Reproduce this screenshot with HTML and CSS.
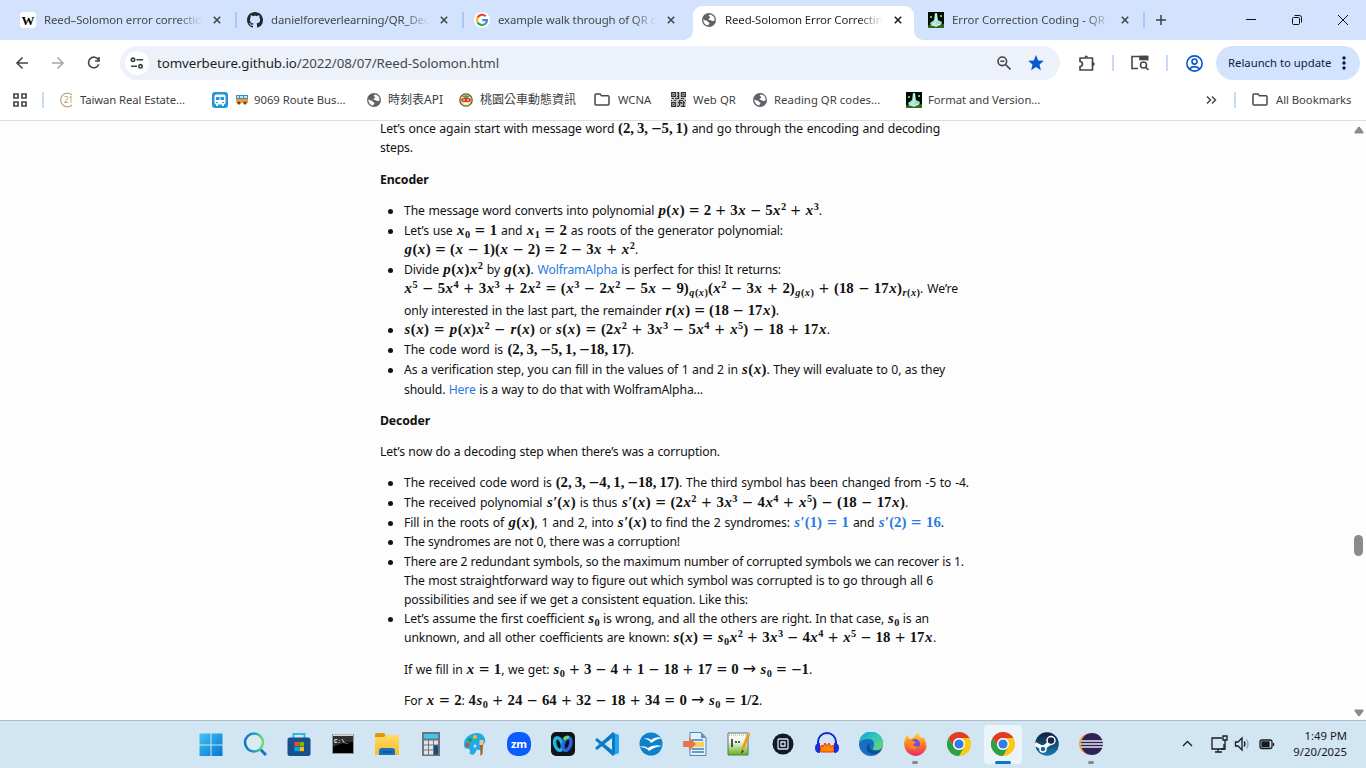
FILE: index.html
```html
<!DOCTYPE html>
<html lang="en">
<head>
<meta charset="utf-8">
<title>Reed-Solomon Error Correcting Codes</title>
<link rel="stylesheet" href="styles.css">
</head>
<body>
<svg class="defs" aria-hidden="true">
  <defs>
    <symbol id="x" viewBox="0 0 8 8"><path d="M.8.8l6.4 6.4M7.2.8L.8 7.2" stroke="currentColor" stroke-width="1.6" fill="none"/></symbol>
    <symbol id="globe" viewBox="0 0 14 14"><circle cx="7" cy="7" r="7" fill="#5f6368"/><path d="M8.2 1.4c-2 .4-1.7 1.8-.7 2.2 1.3.3.6 1.5-.5 1.9-1 .3-.3 1.4.8 1.4 1.4 0 1.7 1.1 2.8 1.2 1 .1 1.7-.5 2-1.2.2-3-1.900-5-4.400-5.500zM1.400 6.200c1.500 1.500 2.600 1.200 3.700 1.500.8.4.6 1.600 1.700 1.700 1.100.2.800 1 .200 1.500-.7.600-.600 1.300-.900 1.700-3-.6-5-3.200-4.700-6.400z" fill="#fff"/></symbol>
    <symbol id="folder" viewBox="0 0 16 13"><path d="M1 2q0-1 1-1h4l1.600 1.700H14q1 0 1 1V11q0 1-1 1H2q-1 0-1-1z" fill="none" stroke="#474747" stroke-width="1.500"/></symbol>
    <symbol id="spring" viewBox="0 0 16 16"><path fill="#020802" d="M0 0h16v16H0z"/><path d="M7 1h2l1 7 4 2-1 4-5 1-5-1-1-3 4-3z" fill="#9bdcc4"/><path d="M8 2v8l-3 2 3 2 4-2" stroke="#edfff8" fill="none"/><path d="M2 4h2v2H2zM12 3h2v2h-2z" fill="#4fd45b"/><path d="M0 13l4 1 4 1 4-2 4-1v4H0z" fill="#306c18"/></symbol>
    <symbol id="chrome" viewBox="0 0 24 24"><circle cx="12" cy="12" r="12" fill="#fbc816"/><path d="M1.600 6A12 12 0 0 1 22.400 6H12a6 6 0 0 0-5.200 9z" fill="#e23b2e"/><path d="M1.600 6A12 12 0 0 0 12 24l5.200-9a6 6 0 0 1-10.400 0z" fill="#2da04b"/><circle cx="12" cy="12" r="6" fill="#fff"/><circle cx="12" cy="12" r="4.600" fill="#2f7de9"/></symbol>
    <linearGradient id="win" x2="1" y2="1"><stop stop-color="#40c4f5"/><stop offset="1" stop-color="#0675cd"/></linearGradient>
    <linearGradient id="lens" x2="1"><stop stop-color="#1271c8"/><stop offset=".5" stop-color="#16a0ba"/><stop offset="1" stop-color="#6ddc73"/></linearGradient>
    <linearGradient id="fold" x2="0" y2="1"><stop stop-color="#ffdb67"/><stop offset="1" stop-color="#f9bd24"/></linearGradient>
    <linearGradient id="edge" x2="1" y2="1"><stop stop-color="#129fd7"/><stop offset=".5" stop-color="#32c8bb"/><stop offset="1" stop-color="#72d65c"/></linearGradient>
    <linearGradient id="fox" x2="0" y2="1"><stop stop-color="#ffe13b"/><stop offset=".5" stop-color="#ff8025"/><stop offset="1" stop-color="#e72768"/></linearGradient>
    <linearGradient id="steam" x2="0" y2="1"><stop stop-color="#101c3d"/><stop offset="1" stop-color="#157fb0"/></linearGradient>
    <linearGradient id="webex" x2="1"><stop stop-color="#27d1e8"/><stop offset=".5" stop-color="#2465ee"/><stop offset="1" stop-color="#5dd66c"/></linearGradient>
    <linearGradient id="doc" x2="0" y2="1"><stop stop-color="#fff"/><stop offset=".4" stop-color="#eef6e6"/><stop offset="1" stop-color="#5cb512"/></linearGradient>
  </defs>
</svg>

<header class="tabs">
  <div class="tab t1"><svg class="fav" viewBox="0 0 16 16"><rect width="16" height="16" rx="3" fill="#fff"/><text x="8" y="12.500" text-anchor="middle" class="wiki">W</text></svg><span class="title">Reed–Solomon error correctio</span><svg class="x"><use href="#x"/></svg></div>
  <div class="tab t2"><svg class="fav" viewBox="0 0 16 16"><path fill="#24292f" d="M8 0C3.580 0 0 3.580 0 8c0 3.540 2.290 6.530 5.470 7.590.4.070.55-.17.55-.38 0-.19-.01-.82-.01-1.490-2.010.37-2.530-.49-2.690-.94-.09-.23-.48-.94-.82-1.130-.28-.15-.68-.52-.01-.53.63-.01 1.080.58 1.230.82.72 1.210 1.870.87 2.330.66.07-.52.28-.87.51-1.070-1.780-.2-3.640-.89-3.640-3.950 0-.87.31-1.590.82-2.150-.08-.2-.36-1.020.08-2.120 0 0 .67-.21 2.200.82.64-.18 1.320-.27 2-.27s1.360.09 2 .27c1.530-1.040 2.200-.82 2.200-.82.44 1.100.16 1.920.08 2.120.51.56.82 1.270.82 2.150 0 3.070-1.870 3.750-3.650 3.950.29.25.54.73.54 1.480 0 1.070-.01 1.930-.01 2.200 0 .21.15.46.55.38A8.010 8.010 0 0 0 16 8c0-4.420-3.580-8-8-8z"/></svg><span class="title">danielforeverlearning/QR_Dec</span><svg class="x"><use href="#x"/></svg></div>
  <div class="tab t3"><svg class="fav" viewBox="0 0 16 16"><circle cx="8" cy="8" r="8" fill="#fff"/><g fill="none" stroke-width="2.200"><path d="M11.700 4.300A5 5 0 0 0 3.600 5.600" stroke="#ea4335"/><path d="M3.600 5.600a5 5 0 0 0 0 4.800" stroke="#fbbc05"/><path d="M3.600 10.400a5 5 0 0 0 7.700 1.300" stroke="#34a853"/><path d="M11.300 11.700A5 5 0 0 0 13 8.200H8.200" stroke="#4285f4"/></g></svg><span class="title">example walk through of QR c</span><svg class="x"><use href="#x"/></svg></div>
  <div class="tab t4 active"><svg class="fav" viewBox="0 0 14 14"><use href="#globe"/></svg><span class="title">Reed-Solomon Error Correctin</span><svg class="x"><use href="#x"/></svg></div>
  <div class="tab t5"><svg class="fav"><use href="#spring"/></svg><span class="title">Error Correction Coding - QR</span><svg class="x"><use href="#x"/></svg></div>
  <svg class="plus" viewBox="0 0 10 10"><path d="M5 0v10M0 5h10" stroke="#3c4043" stroke-width="1.500"/></svg>
  <svg class="wctl" viewBox="0 0 104 12"><g fill="none" stroke="#111" stroke-width="1"><path d="M0 5.500h10M92 1l10 10M102 1L92 11"/><rect x="46.500" y="3.500" width="7" height="7" rx="1"/><path d="M48.500 1.500h5q2 0 2 2v5"/></g></svg>
</header>

<div class="toolbar">
  <svg class="nav" viewBox="0 0 90 16" fill="none" stroke="#474747" stroke-width="1.600"><path d="M13 8H2M7.500 2.500L2 8l5.500 5.500"/><path stroke="#a8a8a8" d="M37 8h11M42.500 2.500L48 8l-5.500 5.500"/><path d="M83.500 5A5.300 5.300 0 1 0 83.800 9.300M84 2v4H80"/></svg>
  <div class="omni">
    <span class="site"><svg viewBox="0 0 14 12" fill="none" stroke="#3c4043" stroke-width="1.600"><circle cx="3" cy="2.800" r="1.700"/><path d="M6.500 2.800H13M1 9.300h6"/><circle cx="10.500" cy="9.300" r="1.700"/></svg></span>
    <span class="url"><em>tomverbeure.github.io</em>/2022/08/07/Reed-Solomon.html</span>
    <svg class="mag" viewBox="0 0 14 14" fill="none" stroke="#474747" stroke-width="1.600"><circle cx="5.300" cy="5.300" r="4.300"/><path d="M8.500 8.500l5 5M3.300 5.300h4"/></svg>
    <svg class="star" viewBox="0 0 16 16"><path d="M8 0l2.200 5.400 5.600.4-4.300 3.700 1.400 5.700L8 12.100l-4.900 3.100 1.400-5.700L.2 5.800l5.600-.4z" fill="#0b57d0"/></svg>
  </div>
  <svg class="puz" viewBox="0 0 16 16" fill="none" stroke="#474747" stroke-width="1.700"><path d="M1 3h12.500v12H1v-3.500q2.500-.3 2.500-2.500T1 6.500z" stroke-linejoin="round"/><path d="M5.500 2.500q0-2 1.700-2t1.700 2zM14 7q1.700 0 1.700 2T14 11z" fill="#474747" stroke="none"/></svg>
  <i class="sep"></i>
  <svg class="lenspage" viewBox="0 0 18 16" fill="none" stroke="#474747" stroke-width="1.600"><path d="M7 13.500H1V1.500h15.500v4"/><path d="M9 1.500h7.500v3H9z" fill="#474747"/><circle cx="12.500" cy="10" r="3"/><path d="M14.500 12l3 3"/></svg>
  <i class="sep"></i>
  <svg class="user" viewBox="0 0 16 16" fill="none" stroke="#0b57d0" stroke-width="1.500"><circle cx="8" cy="8" r="7.200"/><circle cx="8" cy="6.200" r="2.400"/><path d="M3.200 13q4.800-4 9.600 0"/></svg>
  <div class="relaunch"><span>Relaunch to update</span><svg viewBox="0 0 4 14" fill="#041e49"><circle cx="2" cy="2" r="1.700"/><circle cx="2" cy="7" r="1.700"/><circle cx="2" cy="12" r="1.700"/></svg></div>
</div>

<nav class="marks">
  <svg class="apps" viewBox="0 0 14 14" fill="none" stroke="#474747" stroke-width="1.700"><path d="M1 1h4v4H1zM9 1h4v4H9zM1 9h4v4H1zM9 9h4v4H9z"/></svg><i class="sep"></i>
  <span class="bm b1"><svg viewBox="0 0 14 16"><path d="M12 3A6.800 6.800 0 1 0 12 13" fill="none" stroke="#c3ab82" stroke-width="1.200"/><text x="4" y="11" class="t21">21</text></svg>Taiwan Real Estate...</span>
  <span class="bm b2"><svg viewBox="0 0 16 16"><rect width="16" height="16" rx="3" fill="#2596dc"/><rect x="2.500" y="2.500" width="11" height="10" rx="2" fill="#fff"/><path d="M4 5h3.500v3H4zM8.500 5H12v3H8.500zM4 10h2v1H4zM10 10h2v1h-2z" fill="#2596dc"/><path d="M4 12h2v2H4zM10 12h2v2h-2z" fill="#fff"/></svg><svg class="bus" viewBox="0 0 12 10"><path d="M0 0h12v4H0z" fill="#3e8ccc"/><path d="M1 1h2v2H1zM4 1h3v2H4zM8 1h3v2H8z" fill="#bfe5f5"/><path d="M0 4h12v4H0z" fill="#f29b24"/><circle cx="3" cy="8" r="1.600" fill="#713444"/><circle cx="9" cy="8" r="1.600" fill="#713444"/></svg>9069 Route Bus...</span>
  <span class="bm b3"><svg viewBox="0 0 14 14"><use href="#globe"/></svg>時刻表API</span>
  <span class="bm b4"><svg viewBox="0 0 14 14"><circle cx="7" cy="7" r="6.200" fill="#f4e9a5" stroke="#665a22" stroke-width="1.300"/><path d="M3 3.500Q7 1 11 3.500L8 5H6z" fill="#5e9e3e"/><ellipse cx="7" cy="7" rx="5" ry="2.300" fill="#d43b45"/><path d="M4 7h2M8 7h2M5 10h4" stroke="#fff"/></svg>桃園公車動態資訊</span>
  <span class="bm b5"><svg><use href="#folder"/></svg>WCNA</span>
  <span class="bm b6"><svg viewBox="0 0 15 15"><path fill="#c4c4c4" d="M0 0h15v15H0z"/><path d="M0 .7h5m1 0h2m2 0h5M0 4.300h5m1 0h1m3 0h5M.7 0v5M4.300 0v5M10.700 0v5M14.300 0v5M0 10.700h5m2 0h3m2 0h2M0 14.300h5m1 0h2m2 0h4M.7 10v5M4.300 10v5M2 2.500h1M12 2.500h1M2 12.500h1M1 6.500h2m1 0h4m2 0h3M0 8.500h1m2 0h2m3 0h4m2 0h1M7.500 1v6m1 2v5M12.500 9v5M10.500 10v2" stroke="#333" stroke-width="1.200"/></svg>Web QR</span>
  <span class="bm b7"><svg viewBox="0 0 14 14"><use href="#globe"/></svg>Reading QR codes...</span>
  <span class="bm b8"><svg><use href="#spring"/></svg>Format and Version...</span>
  <svg class="more" viewBox="0 0 11 8" fill="none" stroke="#474747" stroke-width="1.500"><path d="M1 .5L4.500 4 1 7.500M6 .5L9.500 4 6 7.500"/></svg><i class="sep"></i>
  <span class="bm all"><svg><use href="#folder"/></svg>All Bookmarks</span>
</nav>

<main class="page">
  <article class="post">
    <p class="para"><span class="line s w560">Let’s once again start with message word <b>(2,&#8201;3,&#8201;<i>−</i>5,&#8201;1)</b> and go through the encoding and decoding</span><span class="line">steps.</span></p>
    <h4 class="line head">Encoder</h4>
    <ul class="list">
      <li><span class="line w418">The message word converts into polynomial <b><var>p</var>(<var>x</var>) <i>=</i> 2 <i>+</i> 3<var>x</var> <i>−</i> 5<var>x</var><sup>2</sup> <i>+</i> <var>x</var><sup>3</sup></b>.</span></li>
      <li><span class="line s w379">Let’s use <b><var>x</var><sub>0</sub> <i>=</i> 1</b> and <b><var>x</var><sub>1</sub> <i>=</i> 2</b> as roots of the generator polynomial:</span><span class="line w234"><b><var>g</var>(<var>x</var>) <i>=</i> (<var>x</var> <i>−</i> 1)(<var>x</var> <i>−</i> 2) <i>=</i> 2 <i>−</i> 3<var>x</var> <i>+</i> <var>x</var><sup>2</sup></b>.</span></li>
      <li><span class="line s w377">Divide <b><var>p</var>(<var>x</var>)<var>x</var><sup>2</sup></b> by <b><var>g</var>(<var>x</var>)</b>. <a>WolframAlpha</a> is perfect for this! It returns:</span><span class="line l w554"><b><var>x</var><sup>5</sup> <i>−</i> 5<var>x</var><sup>4</sup> <i>+</i> 3<var>x</var><sup>3</sup> <i>+</i> 2<var>x</var><sup>2</sup> <i>=</i> (<var>x</var><sup>3</sup> <i>−</i> 2<var>x</var><sup>2</sup> <i>−</i> 5<var>x</var> <i>−</i> 9)<sub><var>q</var>(<var>x</var>)</sub>(<var>x</var><sup>2</sup> <i>−</i> 3<var>x</var> <i>+</i> 2)<sub><var>g</var>(<var>x</var>)</sub> <i>+</i> (18 <i>−</i> 17<var>x</var>)<sub><var>r</var>(<var>x</var>)</sub></b>. We’re</span><span class="line s w375">only interested in the last part, the remainder <b><var>r</var>(<var>x</var>) <i>=</i> (18 <i>−</i> 17<var>x</var>)</b>.</span></li>
      <li><span class="line w426"><b><var>s</var>(<var>x</var>) <i>=</i> <var>p</var>(<var>x</var>)<var>x</var><sup>2</sup> <i>−</i> <var>r</var>(<var>x</var>)</b> or <b><var>s</var>(<var>x</var>) <i>=</i> (2<var>x</var><sup>2</sup> <i>+</i> 3<var>x</var><sup>3</sup> <i>−</i> 5<var>x</var><sup>4</sup> <i>+</i> <var>x</var><sup>5</sup>) <i>−</i> 18 <i>+</i> 17<var>x</var></b>.</span></li>
      <li><span class="line w230">The code word is <b>(2,&#8201;3,&#8201;<i>−</i>5,&#8201;1,&#8201;<i>−</i>18,&#8201;17)</b>.</span></li>
      <li><span class="line w541">As a verification step, you can fill in the values of 1 and 2 in <b><var>s</var>(<var>x</var>)</b>. They will evaluate to 0, as they</span><span class="line w299">should. <a>Here</a> is a way to do that with WolframAlpha...</span></li>
    </ul>
    <h4 class="line head">Decoder</h4>
    <p class="para"><span class="line w340">Let’s now do a decoding step when there’s was a corruption.</span></p>
    <ul class="list">
      <li><span class="line w565">The received code word is <b>(2,&#8201;3,&#8201;<i>−</i>4,&#8201;1,&#8201;<i>−</i>18,&#8201;17)</b>. The third symbol has been changed from -5 to -4.</span></li>
      <li><span class="line w504">The received polynomial <b><var>s</var>′(<var>x</var>)</b> is thus <b><var>s</var>′(<var>x</var>) <i>=</i> (2<var>x</var><sup>2</sup> <i>+</i> 3<var>x</var><sup>3</sup> <i>−</i> 4<var>x</var><sup>4</sup> <i>+</i> <var>x</var><sup>5</sup>) <i>−</i> (18 <i>−</i> 17<var>x</var>)</b>.</span></li>
      <li><span class="line s w540">Fill in the roots of <b><var>g</var>(<var>x</var>)</b>, 1 and 2, into <b><var>s</var>′(<var>x</var>)</b> to find the 2 syndromes: <a><b><var>s</var>′(1) <i>=</i> 1</b></a> and <a><b><var>s</var>′(2) <i>=</i> 16</b></a>.</span></li>
      <li><span class="line w276">The syndromes are not 0, there was a corruption!</span></li>
      <li><span class="line s w560">There are 2 redundant symbols, so the maximum number of corrupted symbols we can recover is 1.</span><span class="line s w529">The most straightforward way to figure out which symbol was corrupted is to go through all 6</span><span class="line s w344">possibilities and see if we get a consistent equation. Like this:</span></li>
      <li><span class="line s w525">Let’s assume the first coefficient <b><var>s</var><sub>0</sub></b> is wrong, and all the others are right. In that case, <b><var>s</var><sub>0</sub></b> is an</span><span class="line w532">unknown, and all other coefficients are known: <b><var>s</var>(<var>x</var>) <i>=</i> <var>s</var><sub>0</sub><var>x</var><sup>2</sup> <i>+</i> 3<var>x</var><sup>3</sup> <i>−</i> 4<var>x</var><sup>4</sup> <i>+</i> <var>x</var><sup>5</sup> <i>−</i> 18 <i>+</i> 17<var>x</var></b>.</span>
        <p class="sub first"><span class="line w408">If we fill in <b><var>x</var> <i>=</i> 1</b>, we get: <b><var>s</var><sub>0</sub> <i>+</i> 3 <i>−</i> 4 <i>+</i> 1 <i>−</i> 18 <i>+</i> 17 <i>=</i> 0 <i class="arrow">→</i> <var>s</var><sub>0</sub> <i>=</i> <i>−</i>1</b>.</span></p>
        <p class="sub"><span class="line w358">For <b><var>x</var> <i>=</i> 2</b>: <b>4<var>s</var><sub>0</sub> <i>+</i> 24 <i>−</i> 64 <i>+</i> 32 <i>−</i> 18 <i>+</i> 34 <i>=</i> 0 <i class="arrow">→</i> <var>s</var><sub>0</sub> <i>=</i> 1/2</b>.</span></p></li>
    </ul>
  </article>
  <div class="scroll"><svg viewBox="0 0 10 8"><path d="M5 .5q.5 0 .8.400L9.500 6q.3 1.500-.700 1.500H1.200Q.2 7.500.5 6L4.200.9Q4.500.5 5 .5z" fill="#8b8b8b"/></svg><span class="thumb"></span><svg class="down" viewBox="0 0 10 8"><path d="M5 .5q.5 0 .8.400L9.500 6q.3 1.500-.700 1.500H1.200Q.2 7.500.5 6L4.200.9Q4.500.5 5 .5z" fill="#8b8b8b"/></svg></div>
</main>

<footer class="taskbar">
  <span class="app"><svg viewBox="0 0 24 24" fill="url(#win)"><path d="M.5 1.500H11.500v11H.5zM12.500 1.500H23.500v11H12.500zM.5 13.500H11.500V24H.5zM12.500 13.500H23.500V24H12.500z"/></svg></span>
  <span class="app"><svg viewBox="0 0 24 24" fill="none"><path d="M17.500 17.500L23 23" stroke="#1272c5" stroke-width="3"/><circle cx="11" cy="10.500" r="9" fill="#dceaf1" stroke="url(#lens)" stroke-width="2.500"/></svg></span>
  <span class="app"><svg viewBox="0 0 24 24"><path d="M6.500 7V2h11v5" fill="none" stroke="#2cb9e5" stroke-width="2"/><rect x=".5" y="5.500" width="23" height="18.500" rx="2.500" fill="#17508b"/><path d="M7.500 10H12v4H7.500z" fill="#f25022"/><path d="M12.500 10H17v4h-4.500z" fill="#7fba00"/><path d="M7.500 14.700H12v4.500H7.500z" fill="#00a4ef"/><path d="M12.500 14.700H17v4.500h-4.500z" fill="#ffb900"/></svg></span>
  <span class="app"><svg viewBox="0 0 24 24"><path fill="#909699" d="M1 2h22v20H1z"/><path d="M2 4h20v17H2z"/><path d="M2 4h20v6q-10 0-20 5z" fill="#303030"/><path d="M2 2.500h20V4H2z" fill="#d8d8d8"/><text x="3" y="11" class="cmd">C:\_</text></svg></span>
  <span class="app"><svg viewBox="0 0 24 24"><path d="M0 3q0-2 2-2h7l2 3v4H0z" fill="#dc960e"/><path d="M0 5h9l2-2h13v20H0z" fill="url(#fold)"/><path d="M4 23v-4q0-3 3-3h10q3 0 3 3v4z" fill="#1571bc"/><path d="M7 20h10" stroke="#0a538f" stroke-width="1.500"/></svg></span>
  <span class="app"><svg viewBox="0 0 24 24"><path fill="#6f7679" d="M3 0h18v24H3z"/><path fill="#42c7f3" d="M5 2h14v4.500H5z"/><path fill="#dfe5e8" d="M5 8.500h4v4H5zM10 8.500h4v4h-4zM15 8.500h4v4h-4zM5 13.500h4v4H5zM10 13.500h4v4h-4zM5 18.500h4v4H5zM10 18.500h4v4h-4z"/><path fill="#174a85" d="M15 13.500h4v9h-4z"/></svg></span>
  <span class="app"><svg viewBox="0 0 24 24"><path d="M1 12C1 5 8 1 14 1c6 0 9 5 8 9l-4 8c-3 0-4-1-5 1-1 3-3 5-6 3-1-2 1-4-1-5s-5 1-5-5z" fill="#22abe3"/><circle cx="12" cy="5" r="2" fill="#ffb319"/><circle cx="7" cy="8" r="2" fill="#249e38"/><circle cx="4.500" cy="13" r="2" fill="#dd4a23"/><circle cx="12" cy="14" r="1.500" fill="#d2e5f3"/><path d="M16.500 8h4v5h-4z" fill="#e5c795"/><path d="M17 13h3l-.5 9-2 2z" fill="#a4662a"/></svg></span>
  <span class="app"><svg viewBox="0 0 24 24"><rect width="24" height="24" rx="10" fill="#0b5cff"/><text x="12" y="15.500" text-anchor="middle" class="zm">zm</text></svg></span>
  <span class="app"><svg viewBox="0 0 24 24"><rect width="24" height="24" rx="5" fill="#111416"/><g fill="none" stroke-width="3.400"><ellipse cx="7.500" cy="12" rx="3.600" ry="6.500" transform="rotate(-18 7.500 12)" stroke="#21b6de"/><ellipse cx="16" cy="12" rx="3.600" ry="6.500" transform="rotate(18 16 12)" stroke="#2465ee"/><path d="M13 7.500q2-3 5-2" stroke="#5dd66c"/></g></svg></span>
  <span class="app"><svg viewBox="0 0 24 24"><path d="M17 0l7 3v18l-7 3z" fill="#27a4ef"/><path d="M17 6v12L2 6 0 8l18 16 2-3V3l-2-3L0 16l2 2z" fill="#087bc3"/></svg></span>
  <span class="app"><svg viewBox="0 0 24 24"><circle cx="12" cy="12" r="11.500" fill="#0e82c9"/><path d="M5 7q4-2 7 1 4-4 11-2-6 1-11 5-2-4-7-4zM0 15q5-2 9 1 5-4 14-2-8 1-13 5-3-4-10-4z" fill="#fff"/></svg></span>
  <span class="app"><svg viewBox="0 0 24 24"><path d="M7 .5h11l5 5V23.500H7z" fill="#e4f1fb" stroke="#5086b7"/><path d="M18 0v6h5" fill="#4a91cd"/><path d="M9 8h11M9 17h12M9 20h12" stroke="#3d80b9" stroke-width="1.500"/><path d="M7 10h14v5H7z" fill="#ffcd58"/><path d="M0 9h6V5l7 7-7 7v-4H0z" fill="#e3764e"/></svg></span>
  <span class="app"><svg viewBox="0 0 24 24"><path d="M1 1h20v22H1z" fill="url(#doc)" stroke="#637263"/><path d="M2 3h18" stroke="#999" stroke-dasharray="1 1"/><path d="M5 7v8M8 10h2M11 10h2" stroke="#222" stroke-width="1.500"/><path d="M22 1L15 19" stroke="#e3a21d" stroke-width="3"/><path d="M15 18l-1 4 3-3" fill="#333"/></svg></span>
  <span class="app"><svg viewBox="0 0 24 24"><circle cx="12" cy="12" r="10.500" fill="#11192f"/><rect x="7" y="7" width="10" height="10" rx="1" fill="none" stroke="#dce2e8" stroke-width="1.300"/><path d="M10 10h4v4h-4z" fill="none" stroke="#dce2e8" stroke-width="1.300"/></svg></span>
  <span class="app"><svg viewBox="0 0 24 24"><path d="M3 13V10a9 9 0 0 1 18 0v3" fill="none" stroke="#112ac9" stroke-width="2"/><path d="M5 15l2-2 1 2 2-4 2 3 2-3 2 4 2-2 1 5-1 2H6z" fill="#ff8a00" stroke="#f62b0c"/><path d="M5 11q-5 0-5 5t5 5zM19 11q5 0 5 5t-5 5z" fill="#1c2ed1"/></svg></span>
  <span class="app"><svg viewBox="0 0 24 24"><circle cx="12" cy="12" r="12" fill="#176fc0"/><path d="M0 11A12 12 0 0 1 24 12q0 6-7 6-5 0-2-4 1-7-6-7-6 0-9 4z" fill="url(#edge)"/><path d="M10 11q-6 8 3 11 7 0 9-4-8 3-11-1z" fill="#0d4a94"/></svg></span>
  <span class="app"><svg viewBox="0 0 24 24"><path d="M4 3l3 4 4-2 4-5 2 5 4 1q5 9 0 14-8 8-17 0-6-8 0-17z" fill="url(#fox)"/><circle cx="12" cy="12" r="5" fill="#7450d3"/><path d="M4 8q5-2 9 3l-3 1q1 4 6 2-4 6-10 1z" fill="#ff8a20"/></svg><i class="dot"></i></span>
  <span class="app"><svg><use href="#chrome"/></svg></span>
  <span class="app on"><svg><use href="#chrome"/></svg><i class="bar"></i></span>
  <span class="app"><svg viewBox="0 0 24 24"><circle cx="12" cy="12" r="11.800" fill="url(#steam)"/><path d="M0 12l8 4 7-5" stroke="#fff" stroke-width="4" fill="none"/><circle cx="16" cy="8.500" r="4" fill="#15264c" stroke="#fff" stroke-width="1.500"/><circle cx="8" cy="17" r="3" fill="#226395" stroke="#fff" stroke-width="1.500"/></svg></span>
  <span class="app"><svg viewBox="0 0 24 24"><circle cx="10.500" cy="12" r="10.500" fill="#f49b36"/><circle cx="13" cy="12" r="11" fill="#2c2255"/><path d="M2 9h22M1.500 12H24M2 15h22" stroke="#e7e5ef" stroke-width="1.500"/></svg><i class="dot"></i></span>
  <svg class="tray" viewBox="0 0 96 20" fill="none" stroke="#171b20" stroke-width="1.300"><path d="M1 12l4.500-4.500L10 12"/><path d="M40 4H30v11h12v-5M36 15v3M33 18h7"/><path d="M41 2h4v4h-4zM43 6v9h-4"/><path d="M53.500 8H56l4-4v12l-4-4h-2.500zM62 7.500q2 2.500 0 5"/><path d="M64.500 5.500q3 4.500 0 9" stroke="#93a2b0"/><rect x="78" y="6" width="12" height="8.500" rx="2"/><path d="M80 8h7v4.500h-7z" fill="#171b20"/><path d="M91.500 9v3"/></svg>
  <div class="clock"><span>1:49 PM</span><span>9/20/2025</span></div>
</footer>
</body>
</html>
```
FILE: styles.css
```css
* { box-sizing: border-box; }
body { margin: 0; width: 1366px; height: 768px; overflow: hidden; background: #fff; color: #111; font: 11.4px/20px "Noto Sans", "Noto Sans CJK TC", sans-serif; display: flex; flex-direction: column; }
svg { flex: none; display: block; }
.defs { position: absolute; width: 0; height: 0; }

.tabs { height: 40px; background: #d3e3fd; display: flex; align-items: center; flex: none; }
.tab { display: flex; align-items: center; height: 24px; color: #454746; position: relative; }
.t1, .t2, .t3, .t4, .t5 { padding-left: 20px; }
.t1 { width: 237px; border-right: 2px solid #a8c7fa; height: 16px; }
.t2 { width: 227px; padding-left: 10px; border-right: 2px solid #a8c7fa; height: 16px; }
.t3 { width: 229px; padding-left: 10px; }
.t4 { width: 221px; padding-left: 9px; }
.t5 { width: 231px; padding-left: 14px; border-right: 2px solid #a8c7fa; height: 16px; }
.tab.active { height: 34px; align-self: flex-end; background: #fff; border-radius: 9px 9px 0 0; color: #1f1f1f; padding-bottom: 6px; }
.active::before, .active::after { content: ""; position: absolute; bottom: 0; width: 9px; height: 9px; }
.active::before { left: -9px; background: radial-gradient(circle at 0 0, transparent 8.5px, #fff 9px); }
.active::after { right: -9px; background: radial-gradient(circle at 100% 0, transparent 8.5px, #fff 9px); }
.fav { width: 16px; height: 16px; margin-right: 8px; }
.active .fav { width: 14px; height: 14px; margin: 0 9px 0 0; }
.title { width: 158px; white-space: nowrap; line-height: 20px; letter-spacing: -.1px; -webkit-mask-image: linear-gradient(90deg, #000 134px, transparent 158px); mask-image: linear-gradient(90deg, #000 134px, transparent 158px); }
.t5 .title { letter-spacing: 0; }
.x { width: 8px; height: 8px; margin-left: 11px; }
.active .x { margin-left: 11px; }
.wiki { font: bold 13px "Liberation Serif", serif; }
.plus { width: 10px; height: 10px; margin-left: 11px; }
.wctl { width: 104px; height: 12px; margin-left: 80px; }

.toolbar { height: 46px; flex: none; display: flex; align-items: center; padding: 0 6px 0 15px; }
.nav { width: 90px; height: 16px; margin-right: 15px; }
.omni { width: 940px; flex: none; height: 34px; border-radius: 17px; background: #edf1fa; display: flex; align-items: center; padding-left: 5px; }
.site { width: 24px; height: 24px; border-radius: 50%; background: #fff; display: flex; align-items: center; justify-content: center; margin-right: 8px; }
.site svg { width: 14px; height: 12px; }
.url { width: 840px; font-size: 13.3px; color: #474747; letter-spacing: -.07px; }
.url em { font-style: normal; color: #1f1f1f; }
.mag { width: 14px; height: 14px; }
.star { width: 16px; height: 16px; margin-left: 17px; }
.puz { width: 16px; height: 16px; margin: 0 17px 0 19px; }
.sep { width: 2px; height: 16px; background: #c8dcfa; flex: none; }
.lenspage { width: 18px; height: 16px; margin: 0 17px 0 17px; }
.user { width: 17px; height: 17px; margin: 0 13px 0 18px; }
.relaunch { width: 144px; height: 34px; border-radius: 17px; background: #d3e3fd; color: #041e49; display: flex; align-items: center; padding-left: 12px; white-space: nowrap; flex: none; }
.relaunch span { width: 114px; font-size: 11.3px; }
.relaunch svg { width: 4px; height: 14px; }

.marks { height: 35px; flex: none; display: flex; align-items: center; padding: 0 0 7px 13px; color: #3c4043; font-size: 11.3px; border-bottom: 1px solid #dedede; letter-spacing: -.05px; }
.apps { width: 14px; height: 14px; margin-right: 15px; }
.bm { display: flex; align-items: center; white-space: nowrap; flex: none; }
.bm svg { width: 14px; height: 14px; margin-right: 7px; }
.b1 { width: 152px; margin-left: 16px; letter-spacing: -.1px; }
.b1 svg { height: 16px; margin-right: 6px; }
.b2 { width: 155px; letter-spacing: -.02px; }
.b2 svg, .b8 svg { width: 16px; height: 16px; }
.b2 .bus { width: 12px; height: 10px; margin: 0 6px 0 1px; }
.b3 { width: 92px; }
.b4 { width: 135px; }
.b3, .b4 { font-size: 12px; letter-spacing: 0; }
.b5 { width: 77px; }
.b5 svg, .all svg { width: 16px; height: 13px; margin-right: 8px; }
.b6 { width: 82px; letter-spacing: .1px; }
.b6 svg { width: 15px; height: 15px; }
.b7 { width: 153px; letter-spacing: .05px; }
.b8 { width: 300px; }
.b8 svg { margin-right: 6px; }
.t21 { font-size: 8px; fill: #b19668; }
.more { width: 11px; height: 8px; margin-right: 17px; }
.all { margin-left: 16px; }

.page { height: 599px; flex: none; background: #fdfdfd; overflow: hidden; display: flex; justify-content: space-between; }
.post { margin: -2px 0 0 380px; font-size: 12.2px; letter-spacing: -.13px; }
p, h4, ul { margin: 0; padding: 0; }
.line { display: block; height: 20px; line-height: 20px; white-space: nowrap; text-align-last: justify; width: fit-content; }
.line.s { height: 19px; }
.line.l { height: 22px; }
.head { margin: 12px 0 11px; font-size: 12.3px; }
.list + .head { margin: 11px 0; }
.para + .list { margin-top: 11px; }
.list { list-style: none; padding-left: 24px; }
.list li { position: relative; }
.list li::before { content: ""; position: absolute; left: -16px; top: 8px; width: 5px; height: 5px; border-radius: 50%; background: #111; }
.sub.first { margin-top: 12px; }
.sub { margin-top: 11px; }
a { color: #2a7ae2; }
b { font: bold 14.8px/1 "Liberation Serif", serif; letter-spacing: 0; }
var { font-style: italic; padding: 0 .5px; }
i { font-style: normal; }
b i { font: 13.5px/1 "DejaVu Sans", sans-serif; margin: 0 -.4px; }
b .arrow { font-size: 16px; line-height: 0; }
sup, sub { font-size: 10.3px; line-height: 0; }
sup { vertical-align: 5px; }
sub { vertical-align: -3px; }
.w230 { width: 230px; } .w234 { width: 234px; } .w276 { width: 276px; } .w299 { width: 299px; }
.w340 { width: 340px; } .w344 { width: 344px; } .w358 { width: 358px; } .w375 { width: 375px; }
.w377 { width: 377px; } .w379 { width: 379px; } .w408 { width: 408px; } .w418 { width: 418px; }
.w426 { width: 426px; } .w504 { width: 504px; } .w525 { width: 525px; } .w529 { width: 529px; }
.w532 { width: 532px; } .w540 { width: 540px; } .w541 { width: 541px; } .w554 { width: 554px; }
.w560 { width: 560px; } .w565 { width: 565px; }
.scroll { width: 15px; display: flex; flex-direction: column; align-items: center; padding: 5px 0 3px; }
.scroll svg { width: 10px; height: 8px; }
.thumb { width: 9px; height: 21px; border-radius: 5px; background: #8b8b8b; margin-top: 401px; }
.scroll .down { margin-top: auto; transform: rotate(180deg); }

.taskbar { height: 48px; flex: none; background: #d2e5f3; border-top: 1px solid #aebcc8; padding: 0 0 2px 189px; display: flex; align-items: center; }
.app { width: 44px; height: 44px; flex: none; display: flex; align-items: center; justify-content: center; position: relative; }
.app svg { width: 24px; height: 24px; }
.on::before { content: ""; position: absolute; inset: 3px 3px 2px; background: #ebf4fb; border-radius: 4px; }
.on svg { position: relative; }
.dot, .bar { position: absolute; bottom: 2px; width: 6px; height: 3px; border-radius: 2px; background: #838b92; }
.bar { width: 16px; background: #0975cd; }
.cmd { font: bold 6px "Liberation Mono", monospace; fill: #fff; }
.zm { font: bold 11px "Noto Sans", sans-serif; fill: #fff; }
.tray { width: 96px; height: 20px; margin-left: 69px; }
.clock { display: flex; flex-direction: column; align-items: flex-end; width: 69px; line-height: 16px; font-size: 11.3px; color: #15181b; white-space: nowrap; flex: none; }
```
